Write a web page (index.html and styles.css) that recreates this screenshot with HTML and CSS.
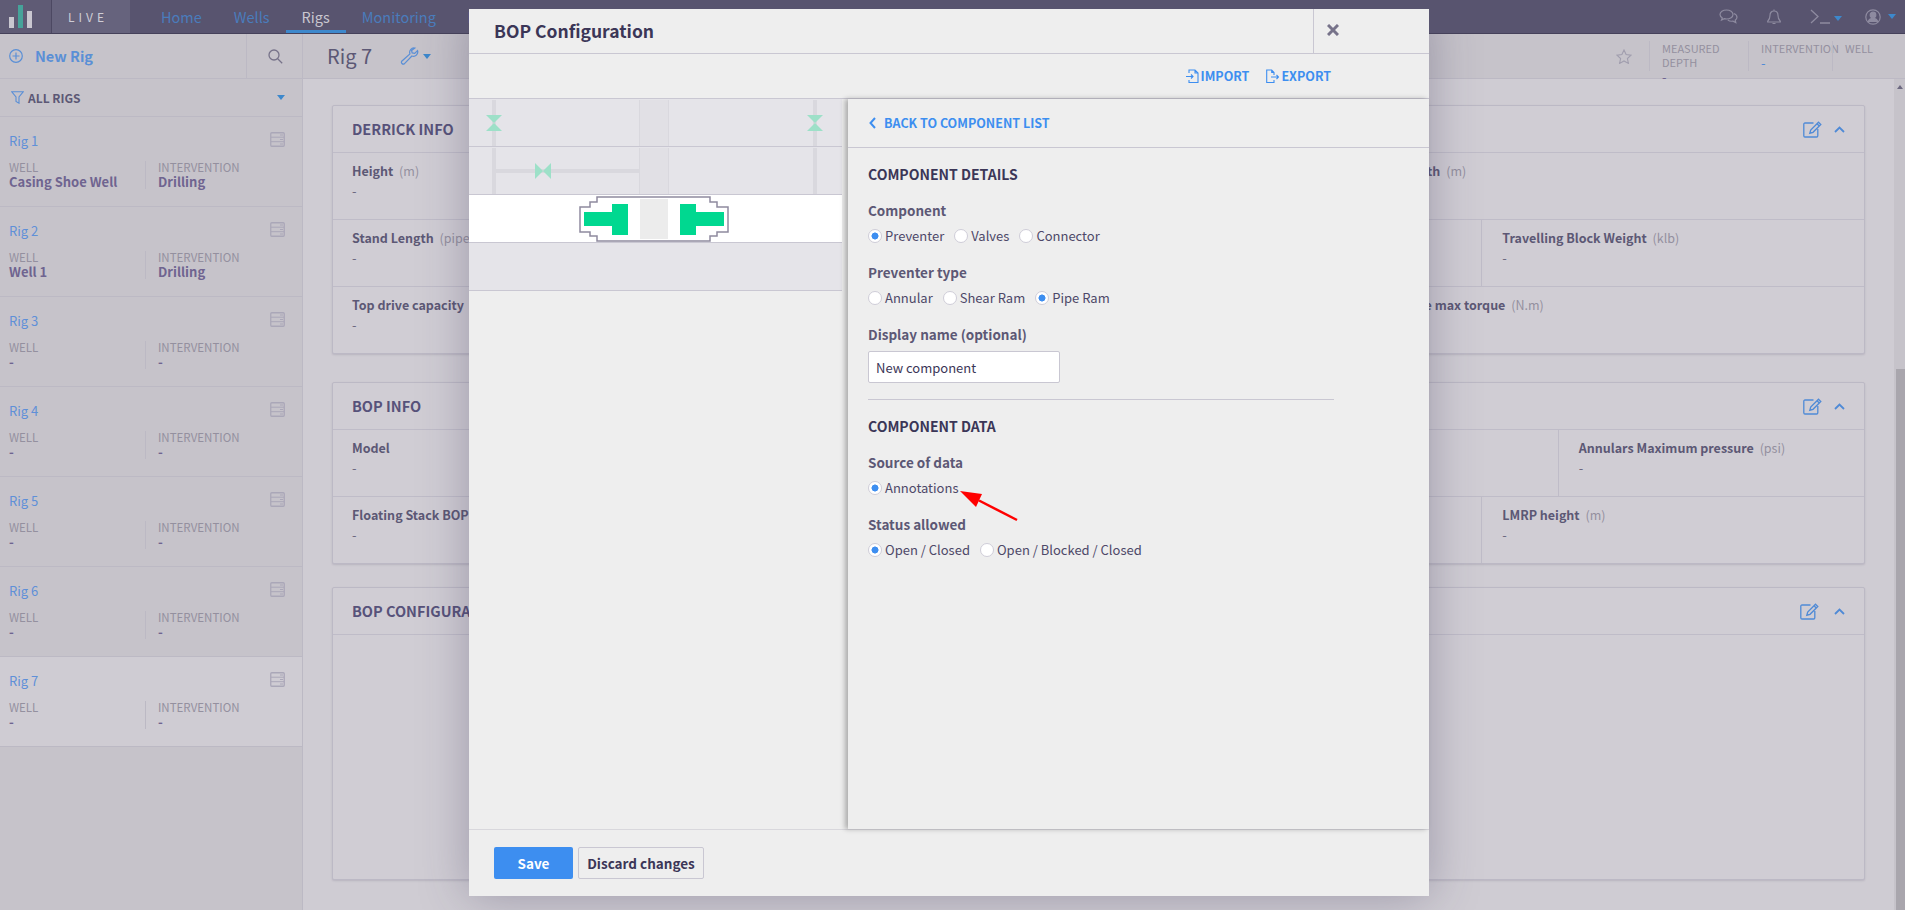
FILE: index.html
```html
<!DOCTYPE html>
<html lang="en">
<head>
  <meta charset="UTF-8" />
  <title>Rigs - BOP Configuration</title>
  <link rel="stylesheet" href="styles.css">
</head>
<body>
  <svg class="icon-defs" width="0" height="0">
    <symbol id="i-server" viewBox="0 0 15 15">
      <rect x="0.75" y="0.75" width="13.5" height="13.5" rx="1" fill="none" stroke="currentColor" stroke-width="1.3"/>
      <path d="M1 5.2h13M1 9.7h13M10 3h3M10 7.5h3M10 12h3" fill="none" stroke="currentColor" stroke-width="1"/>
    </symbol>
    <symbol id="i-edit" viewBox="0 0 19 17">
      <path d="M10.5 2H2a1.2 1.2 0 0 0-1.2 1.2v11.6A1.2 1.2 0 0 0 2 16h11.600a1.200 1.200 0 0 0 1.200-1.200V8" fill="none" stroke="currentColor" stroke-width="1.300"/>
      <path d="M15.500 1.200l2.300 2.300-7.800 7.800-3.200 0.900 0.900-3.200zM14 2.700l2.300 2.300" fill="none" stroke="currentColor" stroke-width="1.300"/>
    </symbol>
    <symbol id="i-up" viewBox="0 0 11 7">
      <path d="M1 6l4.500-4.500L10 6" fill="none" stroke="currentColor" stroke-width="1.800"/>
    </symbol>
  </svg>

  <nav class="topbar">
    <div class="logo-bars">
      <span class="logo-bar logo-bar-a"></span>
      <span class="logo-bar logo-bar-b"></span>
      <span class="logo-bar logo-bar-c"></span>
    </div>
    <div class="logo-word">LIVE</div>
    <div class="nav-links">
      <a class="nav-link">Home</a>
      <a class="nav-link">Wells</a>
      <a class="nav-link active">Rigs</a>
      <a class="nav-link">Monitoring</a>
      <a class="nav-link">Dashboards</a>
    </div>
    <div class="nav-tools">
      <svg class="nav-icon nav-chat" width="19" height="15" viewBox="0 0 19 15" fill="none" stroke="currentColor" stroke-width="1.200">
        <path d="M7.500 1C3.900 1 1 3 1 5.500c0 1.400 0.900 2.600 2.300 3.400L2.500 11l2.800-1.300c0.700 0.200 1.400 0.300 2.200 0.300 3.600 0 6.500-2 6.500-4.500S11.100 1 7.500 1z"/>
        <path d="M14.800 4.500c1.900 0.700 3.200 2.100 3.200 3.700 0 1.200-0.700 2.200-1.800 3l0.600 2.300-2.800-1.400c-2 0.400-4-0.100-5.200-1.300"/>
      </svg>
      <svg class="nav-icon nav-bell" width="14" height="16" viewBox="0 0 14 16" fill="none" stroke="currentColor" stroke-width="1.200">
        <path d="M7 2C4.500 2 3 3.800 3 6.500c0 3-1 4.500-2.300 5.700v0.800h12.600v-0.800C12 11 11 9.500 11 6.500 11 3.800 9.500 2 7 2zM7 0.500V2M5.500 14.500h3"/>
      </svg>
      <svg class="nav-icon nav-term" width="21" height="15" viewBox="0 0 21 15" fill="none" stroke="currentColor" stroke-width="1.300">
        <path d="M1 1l7 6.500L1 14M10 14h10"/>
      </svg>
      <span class="caret nav-caret-term"></span>
      <svg class="nav-icon nav-user" width="16" height="16" viewBox="0 0 16 16" fill="none" stroke="currentColor" stroke-width="1.200">
        <circle cx="8" cy="8" r="7.200"/>
        <circle cx="8" cy="6" r="2.800" fill="currentColor"/>
        <path d="M3.200 13c0.600-2.600 2.500-3.700 4.800-3.700s4.200 1.100 4.800 3.700" fill="currentColor"/>
      </svg>
      <span class="caret"></span>
    </div>
  </nav>

  <div class="app">
    <aside class="sidebar">
      <div class="side-head">
        <a class="new-rig">
          <svg width="14" height="14" viewBox="0 0 14 14" fill="none" stroke="currentColor" stroke-width="1.200">
            <circle cx="7" cy="7" r="6.300"/>
            <path d="M7 3.500v7M3.500 7h7"/>
          </svg>
          New Rig
        </a>
        <div class="side-search">
          <svg width="15" height="15" viewBox="0 0 15 15" fill="none" stroke="currentColor" stroke-width="1.300">
            <circle cx="6" cy="6" r="5"/>
            <path d="M9.700 9.700l4.500 4.500"/>
          </svg>
        </div>
      </div>
      <div class="side-filter">
        <svg class="filter-icon" width="13" height="13" viewBox="0 0 13 13" fill="none" stroke="currentColor" stroke-width="1.100">
          <path d="M0.800 0.800h11.400L8 6v6.200l-3-1.700V6z"/>
        </svg>
        <span class="filter-name">ALL RIGS</span>
        <span class="caret"></span>
      </div>

      <div class="rig">
        <div class="rig-top"><a class="rig-name">Rig 1</a><svg class="rig-icon" width="15" height="15"><use href="#i-server"/></svg></div>
        <div class="rig-meta">
          <div class="rig-col"><div class="rig-label">WELL</div><div class="rig-value">Casing Shoe Well</div></div>
          <div class="rig-col"><div class="rig-label">INTERVENTION</div><div class="rig-value">Drilling</div></div>
        </div>
      </div>
      <div class="rig">
        <div class="rig-top"><a class="rig-name">Rig 2</a><svg class="rig-icon" width="15" height="15"><use href="#i-server"/></svg></div>
        <div class="rig-meta">
          <div class="rig-col"><div class="rig-label">WELL</div><div class="rig-value">Well 1</div></div>
          <div class="rig-col"><div class="rig-label">INTERVENTION</div><div class="rig-value">Drilling</div></div>
        </div>
      </div>
      <div class="rig">
        <div class="rig-top"><a class="rig-name">Rig 3</a><svg class="rig-icon" width="15" height="15"><use href="#i-server"/></svg></div>
        <div class="rig-meta">
          <div class="rig-col"><div class="rig-label">WELL</div><div class="rig-value">-</div></div>
          <div class="rig-col"><div class="rig-label">INTERVENTION</div><div class="rig-value">-</div></div>
        </div>
      </div>
      <div class="rig">
        <div class="rig-top"><a class="rig-name">Rig 4</a><svg class="rig-icon" width="15" height="15"><use href="#i-server"/></svg></div>
        <div class="rig-meta">
          <div class="rig-col"><div class="rig-label">WELL</div><div class="rig-value">-</div></div>
          <div class="rig-col"><div class="rig-label">INTERVENTION</div><div class="rig-value">-</div></div>
        </div>
      </div>
      <div class="rig">
        <div class="rig-top"><a class="rig-name">Rig 5</a><svg class="rig-icon" width="15" height="15"><use href="#i-server"/></svg></div>
        <div class="rig-meta">
          <div class="rig-col"><div class="rig-label">WELL</div><div class="rig-value">-</div></div>
          <div class="rig-col"><div class="rig-label">INTERVENTION</div><div class="rig-value">-</div></div>
        </div>
      </div>
      <div class="rig">
        <div class="rig-top"><a class="rig-name">Rig 6</a><svg class="rig-icon" width="15" height="15"><use href="#i-server"/></svg></div>
        <div class="rig-meta">
          <div class="rig-col"><div class="rig-label">WELL</div><div class="rig-value">-</div></div>
          <div class="rig-col"><div class="rig-label">INTERVENTION</div><div class="rig-value">-</div></div>
        </div>
      </div>
      <div class="rig rig-active">
        <div class="rig-top"><a class="rig-name">Rig 7</a><svg class="rig-icon" width="15" height="15"><use href="#i-server"/></svg></div>
        <div class="rig-meta">
          <div class="rig-col"><div class="rig-label">WELL</div><div class="rig-value">-</div></div>
          <div class="rig-col"><div class="rig-label">INTERVENTION</div><div class="rig-value">-</div></div>
        </div>
      </div>
    </aside>

    <main class="main">
      <header class="main-head">
        <h1 class="rig-title">Rig 7</h1>
        <svg class="wrench" width="19" height="18" viewBox="0 0 20 19" fill="none" stroke="currentColor" stroke-width="1.300">
          <path d="M15.500 1.100a4.600 4.600 0 0 0-5 6.200L1.800 15a2 2 0 0 0 2.700 2.800l8-8.300a4.600 4.600 0 0 0 6-5.700l-3 2.900-2.700-0.500-0.600-2.600z"/>
        </svg>
        <span class="caret"></span>
        <svg class="star" width="16" height="15" viewBox="0 0 16 15" fill="none" stroke="currentColor" stroke-width="1.100">
          <path d="M8 1l2.100 4.600 4.900 0.600-3.600 3.300 1 4.900L8 11.900l-4.400 2.500 1-4.900L1 6.200l4.900-0.600z"/>
        </svg>
        <div class="head-stat head-stat-md"><div class="stat-label">MEASURED DEPTH</div><div class="stat-value">-</div></div>
        <div class="head-stat head-stat-iv"><div class="stat-label">INTERVENTION</div><div class="stat-value stat-blue">-</div></div>
        <div class="head-stat head-stat-well"><div class="stat-label">WELL</div></div>
      </header>

      <div class="content-wrap">
        <div class="content">
          <section class="card card-derrick">
            <div class="card-head">
              <h2 class="card-title">DERRICK INFO</h2>
              <div class="card-tools">
                <svg class="tool-edit" width="19" height="17"><use href="#i-edit"/></svg>
                <svg class="tool-up" width="11" height="7"><use href="#i-up"/></svg>
              </div>
            </div>
            <div class="card-row cols-3">
              <div class="cell"><div class="cell-label">Height <span class="unit">(m)</span></div><div class="cell-value">-</div></div>
              <div class="cell"></div>
              <div class="cell"><div class="cell-label">Rig Length <span class="unit">(m)</span></div></div>
            </div>
            <div class="card-row cols-4">
              <div class="cell"><div class="cell-label">Stand Length <span class="unit">(pipe(s))</span></div><div class="cell-value">-</div></div>
              <div class="cell"></div>
              <div class="cell"></div>
              <div class="cell"><div class="cell-label">Travelling Block Weight <span class="unit">(klb)</span></div><div class="cell-value">-</div></div>
            </div>
            <div class="card-row cols-3">
              <div class="cell"><div class="cell-label">Top drive capacity <span class="unit">(klb)</span></div><div class="cell-value">-</div></div>
              <div class="cell"></div>
              <div class="cell"><div class="cell-label">Top drive max torque <span class="unit">(N.m)</span></div></div>
            </div>
          </section>

          <section class="card card-bop">
            <div class="card-head">
              <h2 class="card-title">BOP INFO</h2>
              <div class="card-tools">
                <svg class="tool-edit" width="19" height="17"><use href="#i-edit"/></svg>
                <svg class="tool-up" width="11" height="7"><use href="#i-up"/></svg>
              </div>
            </div>
            <div class="card-row cols-5">
              <div class="cell"><div class="cell-label">Model</div><div class="cell-value">-</div></div>
              <div class="cell"></div>
              <div class="cell"></div>
              <div class="cell"></div>
              <div class="cell"><div class="cell-label">Annulars Maximum pressure <span class="unit">(psi)</span></div><div class="cell-value">-</div></div>
            </div>
            <div class="card-row cols-4">
              <div class="cell"><div class="cell-label">Floating Stack BOP Weight</div><div class="cell-value">-</div></div>
              <div class="cell"></div>
              <div class="cell"></div>
              <div class="cell"><div class="cell-label">LMRP height <span class="unit">(m)</span></div><div class="cell-value">-</div></div>
            </div>
          </section>

          <section class="card card-config">
            <div class="card-head">
              <h2 class="card-title">BOP CONFIGURATION</h2>
              <div class="card-tools card-tools-wide">
                <svg class="tool-edit" width="19" height="17"><use href="#i-edit"/></svg>
                <svg class="tool-up" width="11" height="7"><use href="#i-up"/></svg>
              </div>
            </div>
          </section>
        </div>
        <div class="scrollbar">
          <span class="scroll-arrow"></span>
          <span class="scroll-thumb"></span>
        </div>
      </div>
    </main>
  </div>

  <div class="modal">
    <div class="modal-head">
      <h2 class="modal-title">BOP Configuration</h2>
      <button class="modal-close">
        <svg width="12" height="12" viewBox="0 0 12 12" fill="none" stroke="currentColor" stroke-width="3">
          <path d="M1 1l10 10M11 1L1 11"/>
        </svg>
      </button>
    </div>

    <div class="modal-tools">
      <a class="tool-link">
        <svg width="13" height="14" viewBox="0 0 13 14" fill="none" stroke="currentColor" stroke-width="1.100">
          <path d="M3 4V1h6l3 3v9.500H3V11M9 1v3h3M0 7.500h7M5 5.500l2 2-2 2"/>
        </svg>
        IMPORT
      </a>
      <a class="tool-link">
        <svg width="13" height="14" viewBox="0 0 13 14" fill="none" stroke="currentColor" stroke-width="1.100">
          <path d="M8 11v2.500H0.700V1h5l2.300 2.500V6M5.700 1v2.500H8M5 8h7.500M10.500 6l2 2-2 2"/>
        </svg>
        EXPORT
      </a>
    </div>

    <div class="modal-body">
      <div class="stack">
        <div class="stack-row">
          <svg class="stack-art" width="373" height="47">
            <rect class="band" x="170" y="1" width="30" height="46"/>
            <path class="band-edge" d="M170.500 1v46M199.500 1v46"/>
            <rect class="pipe" x="23" y="1" width="4" height="46"/>
            <rect class="pipe" x="344" y="1" width="4" height="46"/>
            <path class="valve" d="M17 16h16l-16 16h16z"/>
            <path class="valve" d="M338 16h16l-16 16h16z"/>
          </svg>
        </div>
        <div class="stack-row">
          <svg class="stack-art" width="373" height="47">
            <rect class="band" x="170" y="1" width="30" height="46"/>
            <path class="band-edge" d="M170.500 1v46M199.500 1v46"/>
            <rect class="pipe" x="23" y="1" width="4" height="46"/>
            <rect class="pipe" x="344" y="1" width="4" height="46"/>
            <rect class="pipe" x="27" y="22" width="143" height="4"/>
            <path class="valve" d="M66 16v16l16-16v16z"/>
          </svg>
        </div>
        <div class="stack-row stack-row-on">
          <svg class="stack-art" width="373" height="47">
            <g transform="translate(111 2)">
              <path class="bop-shell" d="M17 0H130V5H137V10H148V35H137V39H130V44H17V39H10V35H0V10H10V5H17Z"/>
              <rect class="bop-bore" x="60" y="2" width="28" height="40"/>
              <path class="bop-ram" d="M4 15H32V7H48V38H32V29H4Z"/>
              <path class="bop-ram" d="M144 15H116V7H100V38H116V29H144Z"/>
            </g>
          </svg>
        </div>
        <div class="stack-row"></div>
      </div>

      <div class="details">
        <a class="back-link">
          <svg width="7" height="12" viewBox="0 0 7 12" fill="none" stroke="currentColor" stroke-width="2">
            <path d="M6 1L1.500 6 6 11"/>
          </svg>
          BACK TO COMPONENT LIST
        </a>
        <div class="details-form">
          <h3 class="form-title">COMPONENT DETAILS</h3>
          <div class="field-label">Component</div>
          <div class="radios">
            <span class="radio on">Preventer</span>
            <span class="radio">Valves</span>
            <span class="radio">Connector</span>
          </div>
          <div class="field-label">Preventer type</div>
          <div class="radios">
            <span class="radio">Annular</span>
            <span class="radio">Shear Ram</span>
            <span class="radio on">Pipe Ram</span>
          </div>
          <div class="field-label">Display name (optional)</div>
          <input class="text-input" type="text" value="New component" />
          <div class="form-rule"></div>
          <h3 class="form-title">COMPONENT DATA</h3>
          <div class="field-label">Source of data</div>
          <div class="radios">
            <span class="radio on">Annotations</span>
          </div>
          <div class="field-label">Status allowed</div>
          <div class="radios">
            <span class="radio on">Open / Closed</span>
            <span class="radio">Open / Blocked / Closed</span>
          </div>
        </div>
        <svg class="callout" width="60" height="32" viewBox="0 0 60 32">
          <path d="M19 9.500L57 29" fill="none" stroke="#ff0000" stroke-width="2.500"/>
          <path d="M0 0L22 3 16 16z" fill="#ff0000"/>
        </svg>
      </div>
    </div>

    <div class="modal-foot">
      <button class="btn btn-save">Save</button>
      <button class="btn btn-discard">Discard changes</button>
    </div>
  </div>
</body>
</html>
```

FILE: styles.css
```css
* {
  box-sizing: border-box;
}

body {
  margin: 0;
  height: 910px;
  overflow: hidden;
  background: #cfccd3;
  color: #5c5875;
  font-family: "Noto Sans CJK SC", "Noto Sans", sans-serif;
  font-size: 13px;
  line-height: 18px;
}

h1, h2, h3 {
  margin: 0;
  font-weight: 700;
}

.icon-defs {
  position: absolute;
}

.caret {
  width: 0;
  height: 0;
  border-left: 4px solid transparent;
  border-right: 4px solid transparent;
  border-top: 5px solid #3d88cc;
}

/* top bar */
.topbar {
  display: flex;
  height: 34px;
  background: #58546f;
  border-bottom: 1px solid #45415a;
}

.logo-bars {
  display: flex;
  align-items: flex-end;
  gap: 4px;
  width: 52px;
  padding: 0 0 5px 9px;
  background: #5f5b75;
  border-right: 1px solid #4c4862;
}

.logo-bar {
  width: 5px;
  background: #c9c7d0;
}

.logo-bar-a {
  height: 11px;
}

.logo-bar-b {
  height: 23px;
  background: #46a39a;
}

.logo-bar-c {
  height: 17px;
}

.logo-word {
  width: 78px;
  background: #66637d;
  color: #cfcdd6;
  font-size: 12px;
  line-height: 33px;
  letter-spacing: 4px;
  padding-left: 16px;
}

.nav-links {
  display: flex;
  padding-left: 15px;
}

.nav-link {
  padding: 0 16px;
  font-size: 14.500px;
  line-height: 33px;
  color: #4a7cbc;
}

.nav-link.active {
  color: #c9c7d0;
  box-shadow: inset 0 -3px 0 #3d88cc;
}

.nav-tools {
  display: flex;
  align-items: center;
  margin-left: auto;
  color: #8e8ba0;
}

.nav-icon {
  flex: none;
}

.nav-chat {
  margin-right: 29px;
}

.nav-bell {
  margin-right: 29px;
}

.nav-caret-term {
  margin: 3px 23px 0 3px;
}

.nav-user {
  margin-right: 7px;
}

.nav-tools .caret:last-child {
  margin-right: 9px;
}

/* page under the dialog */
.app {
  display: flex;
  height: 876px;
}

.sidebar {
  width: 303px;
  flex: none;
  background: #c6c3ca;
  border-right: 1px solid #bcb9c4;
}

.side-head {
  display: flex;
  height: 45px;
  border-bottom: 1px solid #bcb9c4;
}

.new-rig {
  flex: 1;
  display: flex;
  align-items: center;
  gap: 12px;
  padding-left: 9px;
  color: #5a8fd6;
  font-size: 14.500px;
  font-weight: 700;
}

.side-search {
  width: 56px;
  padding: 15px 0 0 21px;
  border-left: 1px solid #bcb9c4;
  color: #77738a;
}

.side-search svg {
  display: block;
}

.side-filter {
  display: flex;
  align-items: center;
  height: 38px;
  padding: 0 17px 0 11px;
  border-bottom: 1px solid #bcb9c4;
}

.filter-icon {
  color: #5a8fd6;
  margin-right: 4px;
}

.filter-name {
  flex: 1;
  font-size: 12px;
  font-weight: 700;
  color: #5c5875;
}

.rig {
  height: 90px;
  padding: 15px 17px 0 9px;
  border-bottom: 1px solid #bcb9c4;
}

.rig-active {
  background: #cfccd3;
}

.rig-top {
  display: flex;
  justify-content: space-between;
  height: 18px;
}

.rig-name {
  color: #5f90d8;
  font-size: 13px;
}

.rig-icon {
  color: #aaa7b8;
  flex: none;
}

.rig-meta {
  display: flex;
  margin-top: 11px;
}

.rig-col {
  width: 136px;
  height: 28px;
}

.rig-col + .rig-col {
  flex: 1;
  padding-left: 12px;
  border-left: 1px solid #bcb9c4;
}

.rig-label {
  height: 13px;
  font-size: 11.500px;
  line-height: 13px;
  color: #94909f;
}

.rig-value {
  font-size: 13px;
  line-height: 15px;
  font-weight: 700;
  color: #6f6490;
}

.main {
  flex: 1;
  display: flex;
  flex-direction: column;
  min-width: 0;
}

.main-head {
  display: flex;
  align-items: center;
  height: 45px;
  padding-left: 24px;
  background: #c6c3ca;
  border-bottom: 1px solid #bcb9c4;
}

.rig-title {
  font-size: 20px;
  font-weight: 400;
  color: #5c5875;
  margin-right: 28px;
}

.wrench {
  color: #5a8fd6;
  margin-right: 4px;
}

.star {
  margin-left: auto;
  margin-right: 17px;
  color: #a19eae;
}

.head-stat {
  height: 30px;
  padding-left: 12px;
  border-left: 1px solid #bcb9c4;
}

.head-stat-md {
  width: 99px;
}

.head-stat-iv {
  width: 84px;
}

.head-stat-well {
  width: 73px;
}

.stat-label {
  font-size: 11px;
  line-height: 14px;
  color: #94909f;
}

.stat-value {
  font-size: 13px;
  line-height: 16px;
  color: #6f6490;
}

.stat-blue {
  color: #4f8ad6;
}

.content-wrap {
  flex: 1;
  display: flex;
  min-height: 0;
}

.content {
  flex: 1;
  padding: 26px 29px 0 29px;
}

.card {
  background: #d0cdd4;
  border: 1px solid #bcb9c5;
  border-radius: 2px;
  box-shadow: 0 1px 2px rgba(60, 55, 90, 0.15);
}

.card-derrick {
  margin-bottom: 28px;
}

.card-bop {
  margin-bottom: 23px;
}

.card-config {
  height: 293px;
}

.card-head {
  display: flex;
  align-items: center;
  justify-content: space-between;
  height: 47px;
  padding: 0 19px;
  border-bottom: 1px solid #bfbcc8;
}

.card-title {
  font-size: 14.500px;
  font-weight: 700;
  color: #57527a;
}

.card-tools {
  display: flex;
  align-items: center;
  gap: 12px;
  color: #4f8ad6;
}

.card-tools-wide {
  gap: 15px;
}

.card-row {
  display: grid;
  height: 67px;
  border-bottom: 1px solid #bfbcc8;
}

.card-row:last-child {
  height: 66px;
  border-bottom: none;
}

.cols-3 {
  grid-template-columns: repeat(3, 1fr);
}

.cols-4 {
  grid-template-columns: repeat(4, 1fr);
}

.cols-5 {
  grid-template-columns: repeat(5, 1fr);
}

.cell {
  padding: 9px 0 0 20px;
  border-left: 1px solid #bfbcc8;
  white-space: nowrap;
}

.cell:first-child {
  padding-left: 19px;
  border-left: none;
}

.cell-label {
  font-weight: 700;
  font-size: 12.500px;
  color: #5c5875;
}

.unit {
  font-weight: 400;
  color: #94909f;
  margin-left: 3px;
}

.cell-value {
  margin-top: 2px;
  color: #6c6880;
}

.scrollbar {
  position: relative;
  width: 11px;
  background: #c6c3ca;
}

.scroll-arrow {
  position: absolute;
  top: 6px;
  left: 3px;
  border-left: 3px solid transparent;
  border-right: 3px solid transparent;
  border-bottom: 4px solid #6c6880;
}

.scroll-thumb {
  position: absolute;
  top: 290px;
  bottom: 0;
  left: 2px;
  right: 0;
  background: #a9a6ad;
}

/* dialog */
.modal {
  position: absolute;
  top: 9px;
  left: 469px;
  width: 960px;
  height: 887px;
  display: flex;
  flex-direction: column;
  background: #eeeeee;
  color: #3b3657;
  box-shadow: 0 0 45px rgba(60, 55, 90, 0.35);
  clip-path: polygon(0 0, 100% 0, 100% 25px, calc(100% + 100px) 25px, calc(100% + 100px) calc(100% + 100px), -100px calc(100% + 100px), -100px 25px, 0 25px);
}

.modal-head {
  display: flex;
  align-items: center;
  justify-content: space-between;
  height: 45px;
  flex: none;
  padding-left: 25px;
  border-bottom: 1px solid #c9c7d2;
}

.modal-title {
  font-size: 17.500px;
  color: #3b3657;
}

.modal-close {
  width: 116px;
  max-width: 116px;
  height: 44px;
  padding: 0 0 0 13px;
  text-align: left;
  width: 116px;
  border: none;
  border-left: 1px solid #c9c7d2;
  background: none;
  color: #77738a;
}

.modal-tools {
  display: flex;
  justify-content: flex-end;
  align-items: center;
  gap: 17px;
  height: 44px;
  flex: none;
  padding-right: 98px;
}

.tool-link {
  display: flex;
  align-items: center;
  gap: 2px;
  color: #3d8ef0;
  font-size: 12.500px;
  font-weight: 700;
}

.modal-body {
  flex: 1;
  display: flex;
  min-height: 0;
  border-top: 1px solid #c9c7d2;
  border-bottom: 1px solid #d8d7dc;
}

.stack {
  width: 379px;
  flex: none;
  padding-right: 6px;
}

.stack-row {
  height: 48px;
  background: #e5e4e9;
  border-bottom: 1px solid #c9c7d2;
}

.stack-row-on {
  background: #ffffff;
}

.stack-art {
  display: block;
  overflow: visible;
}

.band {
  fill: #e1e0e5;
}

.band-edge {
  fill: none;
  stroke: #d9d8de;
}

.pipe {
  fill: #d9d8de;
}

.valve {
  fill: #9de0c8;
}

.bop-shell {
  fill: #ffffff;
  stroke: #8f8a9f;
  stroke-width: 1.500;
}

.bop-bore {
  fill: #ececec;
}

.bop-ram {
  fill: #00d890;
}

.details {
  position: relative;
  flex: 1;
  min-width: 0;
  box-shadow: -3px 0 5px rgba(0, 0, 0, 0.28);
  background: #eeeeee;
}

.back-link {
  display: flex;
  align-items: center;
  gap: 8px;
  height: 49px;
  padding-left: 21px;
  border-bottom: 1px solid #c9c7d2;
  color: #3d8ef0;
  font-size: 12.500px;
  font-weight: 700;
}

.details-form {
  padding: 17px 20px 0 20px;
}

.form-title {
  font-size: 14px;
  line-height: 18px;
  color: #3b3657;
}

.field-label {
  margin-top: 18px;
  font-size: 13.500px;
  line-height: 18px;
  font-weight: 700;
  color: #5c5875;
}

.radios {
  display: flex;
  gap: 10px;
  margin-top: 8px;
  height: 18px;
}

.radio {
  display: flex;
  align-items: center;
  gap: 3px;
  font-size: 13px;
  line-height: 18px;
  color: #4d4868;
}

.radio::before {
  content: "";
  width: 12px;
  height: 12px;
  border-radius: 50%;
  border: 1px solid #cfcdd8;
  background: #ffffff;
}

.radio.on::before {
  background: radial-gradient(circle, #3d8ef0 0 3.200px, #ffffff 3.800px);
}

.text-input {
  display: block;
  width: 192px;
  height: 32px;
  margin-top: 8px;
  padding: 0 7px;
  border: 1px solid #c9c7d2;
  border-radius: 2px;
  background: #ffffff;
  color: #3b3657;
  font: 13px/18px "Noto Sans CJK SC", "Noto Sans", sans-serif;
}

.form-rule {
  height: 1px;
  margin: 16px 0 17px;
  width: 466px;
  background: #c9c7d2;
}

.callout {
  position: absolute;
  left: 112px;
  top: 392px;
}

.modal-foot {
  display: flex;
  gap: 5px;
  height: 66px;
  flex: none;
  padding: 17px 0 0 25px;
}

.btn {
  height: 32px;
  padding: 0;
  border-radius: 2px;
  font: 700 13.500px/18px "Noto Sans CJK SC", "Noto Sans", sans-serif;
}

.btn-save {
  width: 79px;
  border: none;
  background: #3d8ef0;
  color: #ffffff;
}

.btn-discard {
  width: 126px;
  border: 1px solid #c9c7d2;
  background: #eeeeee;
  color: #3b3657;
}
```
